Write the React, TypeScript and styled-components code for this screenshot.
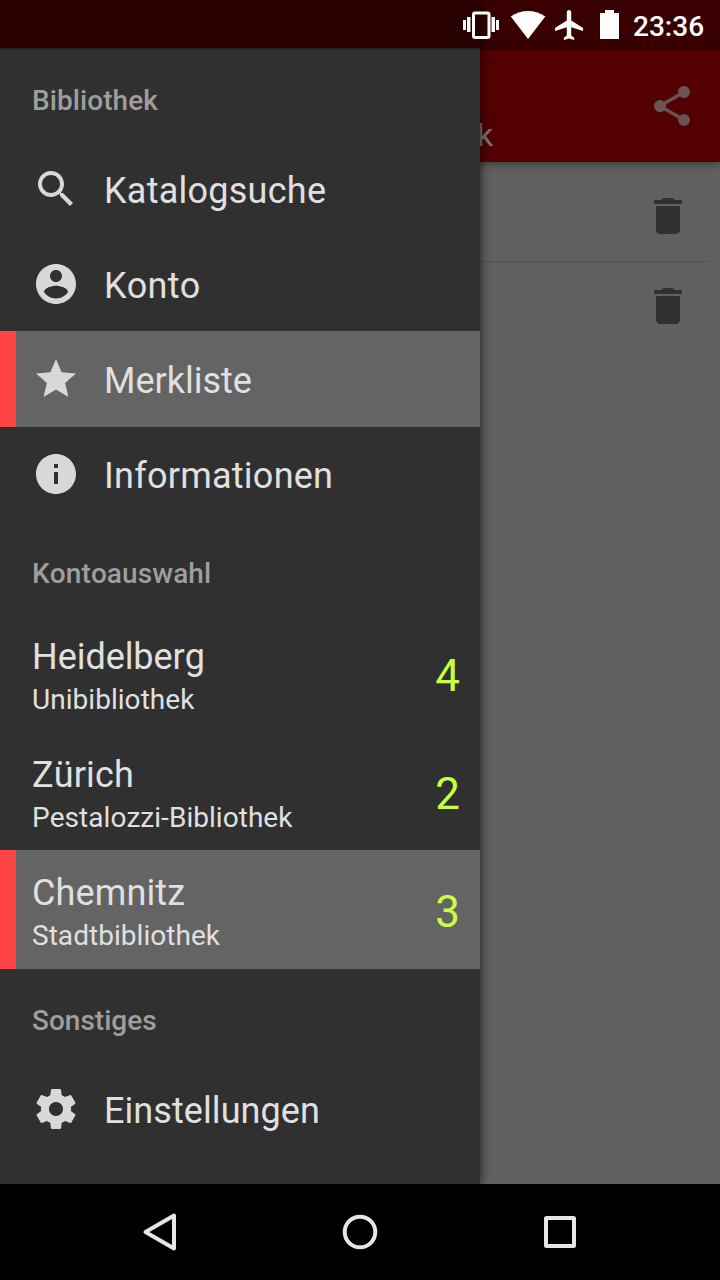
import React from "react";
import styled, { createGlobalStyle } from "styled-components";

const GlobalStyle = createGlobalStyle`
  * { box-sizing: border-box; }
  body {
    margin: 0;
    background: #000;
    font-family: Roboto, "Liberation Sans", sans-serif;
    font-kerning: none;
  }
  svg { display: block; }
`;

const Screen = styled.div`
  position: relative;
  display: flex;
  flex-direction: column;
  width: 720px;
  height: 1280px;
  overflow: hidden;
  background: #606060;
`;

const StatusBar = styled.header`
  flex: none;
  display: flex;
  justify-content: flex-end;
  height: 50px;
  padding-right: 16px;
  background: #380000;
`;

const StatusItems = styled.div`
  position: relative;
  z-index: 3;
  display: flex;
  align-items: flex-start;
  height: 50px;
  color: #fff;
`;

const Clock = styled.time`
  width: 71px;
  margin-left: 13px;
  padding-top: 10px;
  font-size: 28px;
  font-weight: 500;
  line-height: 33px;
  white-space: nowrap;
`;

const AppBar = styled.div`
  flex: none;
  position: relative;
  display: flex;
  align-items: center;
  justify-content: space-between;
  height: 112px;
  padding: 0 24px 0 477px;
  background: #520000;
  box-shadow: 0 2px 8px rgba(0, 0, 0, 0.4);
`;

const Subtitle = styled.div`
  align-self: flex-end;
  padding-bottom: 8px;
  color: #717777;
  font-size: 32px;
  line-height: 38px;
`;

const Content = styled.main`
  flex: 1;
  padding: 9px 10px 0;
`;

const ListRow = styled.div<{ $divider?: boolean }>`
  display: flex;
  align-items: center;
  justify-content: flex-end;
  height: ${(p) => (p.$divider ? 91 : 88)}px;
  padding-right: 18px;
  border-bottom: ${(p) => (p.$divider ? "1px solid #525252" : "0")};
`;

const Drawer = styled.aside`
  position: absolute;
  z-index: 2;
  top: 0;
  left: 0;
  display: flex;
  flex-direction: column;
  width: 480px;
  height: 1184px;
  background: #303030;
  box-shadow: 0 0 10px rgba(0, 0, 0, 0.7);
`;

const DrawerInset = styled.div`
  flex: none;
  height: 50px;
  margin-bottom: -2px;
  background: #290000;
  border-bottom: 2px solid #282527;
`;

const SectionTitle = styled.h2<{ $tracking?: number }>`
  flex: none;
  height: 93px;
  margin: 0;
  padding: 36px 32px 0;
  color: #9e9e9e;
  font-size: 28px;
  font-weight: 500;
  line-height: 33px;
  letter-spacing: ${(p) => p.$tracking ?? 0}px;
`;

const Entry = styled.div<{ $active?: boolean; $height: number }>`
  flex: none;
  display: flex;
  align-items: center;
  height: ${(p) => p.$height}px;
  margin-bottom: -1px;
  padding: 0 20px 0 ${(p) => (p.$active ? 16 : 32)}px;
  border-left: ${(p) => (p.$active ? "16px solid #ff4444" : "0")};
  background: ${(p) => (p.$active ? "#646464" : "transparent")};
  color: #e0e0e0;
`;

const EntryIcon = styled.span`
  display: flex;
  margin-right: 24px;
  color: #d8d8d8;
`;

const EntryLabel = styled.span<{ $tracking?: number }>`
  padding-top: 4px;
  font-size: 36px;
  line-height: 42px;
  letter-spacing: ${(p) => p.$tracking ?? 0}px;
`;

const AccountText = styled.div`
  flex: 1;
  display: flex;
  flex-direction: column;
  padding-top: 6px;
`;

const City = styled.span<{ $tracking?: number }>`
  font-size: 36px;
  line-height: 44px;
  letter-spacing: ${(p) => p.$tracking ?? 0}px;
`;

const Library = styled.span`
  padding-top: 2px;
  font-size: 28px;
  line-height: 37px;
  letter-spacing: 0.04px;
`;

const Count = styled.span`
  padding-top: 4px;
  color: #c8ff40;
  font-size: 44px;
  line-height: 52px;
`;

const NavBar = styled.nav`
  flex: none;
  display: flex;
  justify-content: center;
  height: 96px;
  background: #000;
`;

const NavButton = styled.div`
  display: flex;
  align-items: center;
  justify-content: center;
  width: 200px;
`;

const icons = {
  search:
    "M15.5 14h-.79l-.28-.27C15.41 12.59 16 11.11 16 9.5 16 5.91 13.09 3 9.5 3S3 5.91 3 9.5 5.91 16 9.5 16c1.61 0 3.09-.59 4.23-1.57l.27.28v.79l5 4.99L20.49 19l-4.99-5zm-6 0C7.01 14 5 11.99 5 9.5S7.01 5 9.5 5 14 7.01 14 9.5 11.99 14 9.5 14z",
  account:
    "M12 2C6.48 2 2 6.48 2 12s4.48 10 10 10 10-4.48 10-10S17.52 2 12 2zm0 3c1.66 0 3 1.34 3 3s-1.34 3-3 3-3-1.34-3-3 1.34-3 3-3zm0 14.2c-2.5 0-4.71-1.28-6-3.22.03-1.99 4-3.08 6-3.08 1.99 0 5.97 1.09 6 3.08-1.29 1.94-3.5 3.22-6 3.22z",
  star: "M12 17.27L18.18 21l-1.64-7.03L22 9.24l-7.19-.61L12 2 9.19 8.63 2 9.24l5.46 4.73L5.82 21z",
  info: "M12 2C6.48 2 2 6.48 2 12s4.48 10 10 10 10-4.48 10-10S17.52 2 12 2zm1 15h-2v-6h2v6zm0-8h-2V7h2v2z",
  settings:
    "M19.43 12.98c.04-.32.07-.64.07-.98s-.03-.66-.07-.98l2.11-1.65c.19-.15.24-.42.12-.64l-2-3.46c-.12-.22-.39-.3-.61-.22l-2.49 1c-.52-.4-1.08-.73-1.69-.98l-.38-2.65C14.46 2.18 14.25 2 14 2h-4c-.25 0-.46.18-.49.42l-.38 2.65c-.61.25-1.17.59-1.69.98l-2.49-1c-.23-.09-.49 0-.61.22l-2 3.46c-.13.22-.07.49.12.64l2.11 1.65c-.04.32-.07.65-.07.98s.03.66.07.98l-2.11 1.65c-.19.15-.24.42-.12.64l2 3.46c.12.22.39.3.61.22l2.49-1c.52.4 1.08.73 1.69.98l.38 2.65c.03.24.24.42.49.42h4c.25 0 .46-.18.49-.42l.38-2.65c.61-.25 1.17-.59 1.69-.98l2.49 1c.23.09.49 0 .61-.22l2-3.46c.12-.22.07-.49-.12-.64l-2.11-1.65zM12 15.5c-1.93 0-3.5-1.57-3.5-3.5s1.57-3.5 3.5-3.5 3.5 1.57 3.5 3.5-1.57 3.5-3.5 3.5z",
  share:
    "M18 16.08c-.76 0-1.44.3-1.96.77L8.91 12.7c.05-.23.09-.46.09-.7s-.04-.47-.09-.7l7.05-4.11c.54.5 1.25.81 2.04.81 1.66 0 3-1.34 3-3s-1.34-3-3-3-3 1.34-3 3c0 .24.04.47.09.7L8.04 9.81C7.5 9.31 6.79 9 6 9c-1.66 0-3 1.34-3 3s1.34 3 3 3c.79 0 1.5-.31 2.04-.81l7.12 4.16c-.05.21-.08.43-.08.65 0 1.61 1.31 2.92 2.92 2.92s2.92-1.31 2.92-2.92-1.31-2.92-2.92-2.92z",
  trash: "M6 19c0 1.1.9 2 2 2h8c1.1 0 2-.9 2-2V7H6v12zM19 4h-3.5l-1-1h-5l-1 1H5v2h14V4z",
};

type IconName = keyof typeof icons;

const Icon = ({ name, fill = "currentColor" }: { name: IconName; fill?: string }) => (
  <svg width="48" height="48" viewBox="0 0 24 24" fill={fill}>
    <path d={icons[name]} />
  </svg>
);

const StatusIcons = () => (
  <svg width="157" height="50" viewBox="463 0 157 50" fill="currentColor">
    <path d="M463 20h3v10h-3zM467 17h3.500v15H467zM491.500 17h3.500v15h-3.500zM496 20h3v10h-3z" />
    <rect x="473.5" y="13" width="15.5" height="24.5" rx="1.5" fill="none" stroke="currentColor" strokeWidth="3" />
    <path d="M528 39L510.800 16.500C515.500 13 521.500 11 528 11s12.500 2 17.300 5.500z" />
    <path
      transform="translate(552 7) scale(1.48 1.5)"
      d="M21 16v-2l-8-5V3.500c0-.83-.67-1.500-1.500-1.500S10 2.670 10 3.500V9l-8 5v2l8-2.500V19l-2 1.500V22l3.500-1 3.500 1v-1.500L13 19v-5.500l8 2.500z"
    />
    <path d="M605 10h9v3h5v26h-19V13h5z" />
  </svg>
);

interface MenuItem {
  icon: IconName;
  label: string;
  active?: boolean;
  tracking?: number;
}

const menu: MenuItem[] = [
  { icon: "search", label: "Katalogsuche", tracking: 0.25 },
  { icon: "account", label: "Konto", tracking: 0.25 },
  { icon: "star", label: "Merkliste", active: true },
  { icon: "info", label: "Informationen", tracking: 0.25 },
];

const accounts = [
  { city: "Heidelberg", library: "Unibibliothek", count: 4, tracking: -0.05 },
  { city: "Zürich", library: "Pestalozzi-Bibliothek", count: 2, tracking: 0.15 },
  { city: "Chemnitz", library: "Stadtbibliothek", count: 3, tracking: 0.12, active: true },
];

const MenuEntry = ({ icon, label, active, tracking }: MenuItem) => (
  <Entry $height={96} $active={active}>
    <EntryIcon>
      <Icon name={icon} />
    </EntryIcon>
    <EntryLabel $tracking={tracking}>{label}</EntryLabel>
  </Entry>
);

export default function App() {
  return (
    <>
      <GlobalStyle />
      <Screen>
        <StatusBar>
          <StatusItems>
            <StatusIcons />
            <Clock>23:36</Clock>
          </StatusItems>
        </StatusBar>
        <AppBar>
          <Subtitle>k</Subtitle>
          <Icon name="share" fill="#695353" />
        </AppBar>
        <Content>
          <ListRow $divider>
            <Icon name="trash" fill="#303030" />
          </ListRow>
          <ListRow>
            <Icon name="trash" fill="#303030" />
          </ListRow>
        </Content>
        <Drawer>
          <DrawerInset />
          <SectionTitle $tracking={0.08}>Bibliothek</SectionTitle>
          {menu.map((m) => (
            <MenuEntry key={m.label} {...m} />
          ))}
          <SectionTitle $tracking={0.1}>Kontoauswahl</SectionTitle>
          {accounts.map((a) => (
            <Entry key={a.city} $height={119} $active={a.active}>
              <AccountText>
                <City $tracking={a.tracking}>{a.city}</City>
                <Library>{a.library}</Library>
              </AccountText>
              <Count>{a.count}</Count>
            </Entry>
          ))}
          <SectionTitle>Sonstiges</SectionTitle>
          <MenuEntry icon="settings" label="Einstellungen" tracking={0.08} />
        </Drawer>
        <NavBar>
          <NavButton>
            <svg width="40" height="40" viewBox="0 0 40 40" fill="none" stroke="#e6e6e6" strokeWidth="4" strokeLinejoin="round">
              <path d="M5.500 20L34 3.500v33z" />
            </svg>
          </NavButton>
          <NavButton>
            <svg width="40" height="40" viewBox="0 0 40 40" fill="none" stroke="#e6e6e6" strokeWidth="4">
              <circle cx="20" cy="20" r="15.300" />
            </svg>
          </NavButton>
          <NavButton>
            <svg width="40" height="40" viewBox="0 0 40 40" fill="none" stroke="#e6e6e6" strokeWidth="4" strokeLinejoin="round">
              <rect x="6" y="6" width="28" height="28" rx="0.500" />
            </svg>
          </NavButton>
        </NavBar>
      </Screen>
    </>
  );
}
